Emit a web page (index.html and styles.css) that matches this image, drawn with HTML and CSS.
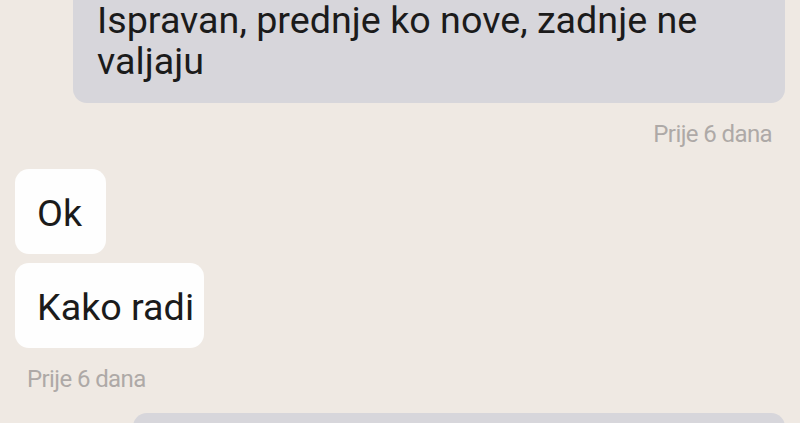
FILE: index.html
```html
<!DOCTYPE html>
<html lang="hr">
<head>
    <meta charset="UTF-8">
    <meta name="viewport" content="width=device-width, initial-scale=1.0">
    <title>Poruke</title>
    <link rel="stylesheet" href="styles.css">
</head>
<body>
    <div class="chat">
        <!-- Poslana poruka -->
        <div class="bubble sent">Ispravan, prednje ko nove, zadnje ne valjaju</div>
        <div class="time sent-time">Prije 6 dana</div>

        <!-- Primljene poruke -->
        <div class="bubble received">Ok</div>
        <div class="bubble received">Kako radi</div>
        <div class="time">Prije 6 dana</div>

        <div class="bubble sent next"></div>
    </div>
</body>
</html>
```

FILE: styles.css
```css
body {
    margin: 0;
    background-color: #efe9e3;
    font-family: Roboto, "Noto Sans", sans-serif;
    overflow: hidden;
    height: 100vh;
}
.chat {
    display: flex;
    flex-direction: column;
    align-items: flex-start;
    margin-top: -22px; /* list is scrolled a bit */
}
.bubble {
    box-sizing: border-box;
    min-width: 91px;
    padding: 24px 10px 20px 22px;
    font-size: 37.7px;
    line-height: 41px;
    color: #1b1b1b;
    border-radius: 14px;
}
.received {
    background: #fefefe;
    margin-left: 15px;
    margin-bottom: 9px;
}
.sent {
    background: #d7d6db;
    align-self: stretch;
    margin-left: 73px;
    margin-right: 15px;
    padding: 22px 24px 21px 24px;
}
.sent.next {
    margin-left: 133px;
    height: 60px;
}
.time {
    margin: 8px 0 20px 27px;
    font-size: 24px;
    line-height: 28px;
    letter-spacing: -0.6px;
    color: #aea9a7;
}
.sent-time {
    align-self: flex-end;
    margin: 17px 28px 21px 0;
}
```
